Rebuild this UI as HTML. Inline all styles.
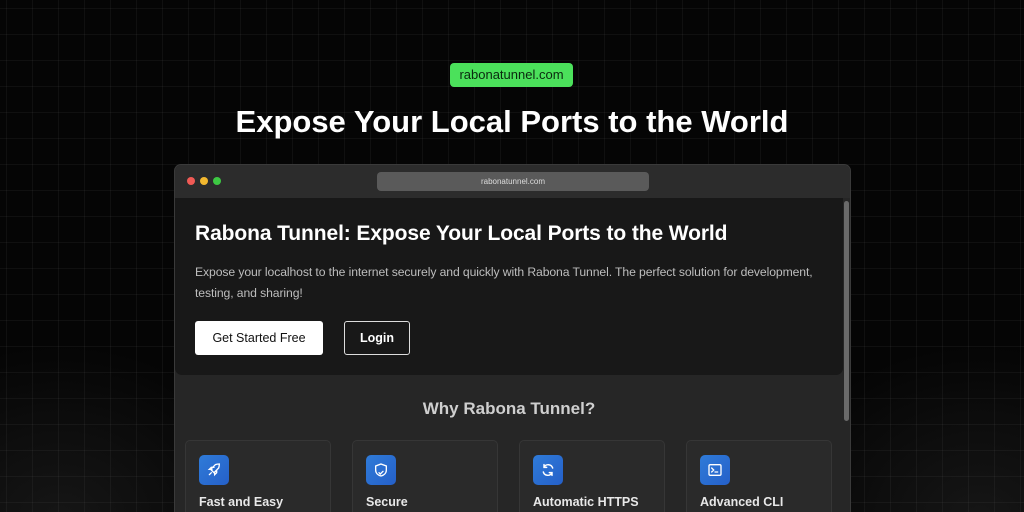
<!DOCTYPE html>
<html><head><style>
*{margin:0;padding:0;box-sizing:border-box}
html,body{width:1024px;height:512px;overflow:hidden;background:#050505}
body{font-family:"Liberation Sans",sans-serif;position:relative}
.grid{position:absolute;inset:0;background-image:linear-gradient(rgba(255,255,255,.045) 1px,transparent 1px),linear-gradient(90deg,rgba(255,255,255,.045) 1px,transparent 1px);background-size:26px 26px;background-position:6px 8px}
.glow{position:absolute;inset:0;background:radial-gradient(ellipse 420px 300px at 512px 560px,rgba(120,120,120,.28),transparent 70%),radial-gradient(ellipse 300px 250px at 60px 520px,rgba(90,90,90,.2),transparent 70%),radial-gradient(ellipse 300px 250px at 980px 520px,rgba(90,90,90,.2),transparent 70%)}
.badge{position:absolute;left:450px;top:63px;width:123px;height:24px;background:#4be15b;border-radius:4px;color:#0b2a0f;font-size:13px;text-align:center;line-height:24px}
h1{position:absolute;top:104px;left:0;width:1024px;text-align:center;color:#fff;font-size:31px;font-weight:bold}
.win{position:absolute;left:174px;top:164px;width:677px;height:348px;background:#262626;border-radius:7px 7px 0 0;border:1px solid #3a3a3a;border-bottom:none;overflow:hidden}
.tb{height:33px;background:#2c2c2c;position:relative}
.dot{position:absolute;top:12px;width:8px;height:8px;border-radius:50%}
.addr{position:absolute;left:202px;top:7px;width:272px;height:19px;background:#5a5a5a;border-radius:4px;color:#ddd;font-size:8px;text-align:center;line-height:19px}
.hero{position:absolute;left:0;top:33px;width:668px;height:177px;background:#181818;border-radius:0 0 7px 7px}
.sb{position:absolute;left:669px;top:36px;width:5px;height:220px;background:#6a6a6a;border-radius:3px}
.hero h2{position:absolute;left:20px;top:24px;color:#fff;font-size:21px;font-weight:bold;letter-spacing:-0.1px}
.hero p{position:absolute;left:20px;top:64px;width:632px;color:#bdbdbd;font-size:12.2px;line-height:21px;letter-spacing:-0.1px}
.b1{position:absolute;left:20px;top:123px;width:128px;height:34px;background:#fff;color:#111;border-radius:3px;font-size:12.5px;text-align:center;line-height:34px}
.b2{position:absolute;left:169px;top:123px;width:66px;height:34px;border:1px solid #ddd;color:#fff;border-radius:3px;font-size:12.5px;text-align:center;line-height:32px;font-weight:bold}
.why{position:absolute;top:234px;left:0;width:668px;text-align:center;color:#cfcfcf;font-size:17px;font-weight:bold}
.card{position:absolute;top:275px;width:146px;height:73px;background:#2a2a2a;border:1px solid #363636;border-bottom:none;border-radius:5px 5px 0 0}
.ic{position:absolute;left:13px;top:14px;width:30px;height:30px;border-radius:5px;background:linear-gradient(135deg,#2f7bd8,#2560c9);display:flex;align-items:center;justify-content:center}
.ct{position:absolute;left:13px;top:54px;color:#e8e8e8;font-size:12.5px;font-weight:bold}
</style></head><body>
<div class="grid"></div><div class="glow"></div>
<div class="badge">rabonatunnel.com</div>
<h1>Expose Your Local Ports to the World</h1>
<div class="win">
<div class="tb"><div class="dot" style="left:12px;background:#f05a55"></div><div class="dot" style="left:25px;background:#f3b82f"></div><div class="dot" style="left:38px;background:#3dc843"></div><div class="addr">rabonatunnel.com</div></div>
<div class="hero"><h2>Rabona Tunnel: Expose Your Local Ports to the World</h2>
<p>Expose your localhost to the internet securely and quickly with Rabona Tunnel. The perfect solution for development, testing, and sharing!</p>
<div class="b1">Get Started Free</div><div class="b2">Login</div></div>
<div class="sb"></div>
<div class="why">Why Rabona Tunnel?</div>
<div class="card" style="left:10px"><div class="ic"><svg width="16" height="16" viewBox="0 0 24 24" fill="none" stroke="#fff" stroke-width="2" stroke-linecap="round"><path d="M5 19l3-3M14 4c3-1 6-1 6-1s0 3-1 6l-7 7-5-5z M9 11H5l3-3h4 M13 15v4l3-3v-4"/></svg></div><div class="ct">Fast and Easy</div></div>
<div class="card" style="left:177px"><div class="ic"><svg width="16" height="16" viewBox="0 0 24 24" fill="none" stroke="#fff" stroke-width="2" stroke-linecap="round"><path d="M12 3l8 3v6c0 5-4 8-8 9-4-1-8-4-8-9V6z M9 16l2 2 4-4"/></svg></div><div class="ct">Secure</div></div>
<div class="card" style="left:344px"><div class="ic"><svg width="16" height="16" viewBox="0 0 24 24" fill="none" stroke="#fff" stroke-width="2.2" stroke-linecap="round"><path d="M19 9a7 7 0 0 0-13-1M5 15a7 7 0 0 0 13 1M6 4v4h4M18 20v-4h-4"/></svg></div><div class="ct">Automatic HTTPS</div></div>
<div class="card" style="left:511px"><div class="ic"><svg width="16" height="16" viewBox="0 0 24 24" fill="none" stroke="#fff" stroke-width="2" stroke-linecap="round"><rect x="3" y="4" width="18" height="16" rx="2"/><path d="M7 9l3 3-3 3M12 15h4"/></svg></div><div class="ct">Advanced CLI</div></div>
</div>
</body></html>
